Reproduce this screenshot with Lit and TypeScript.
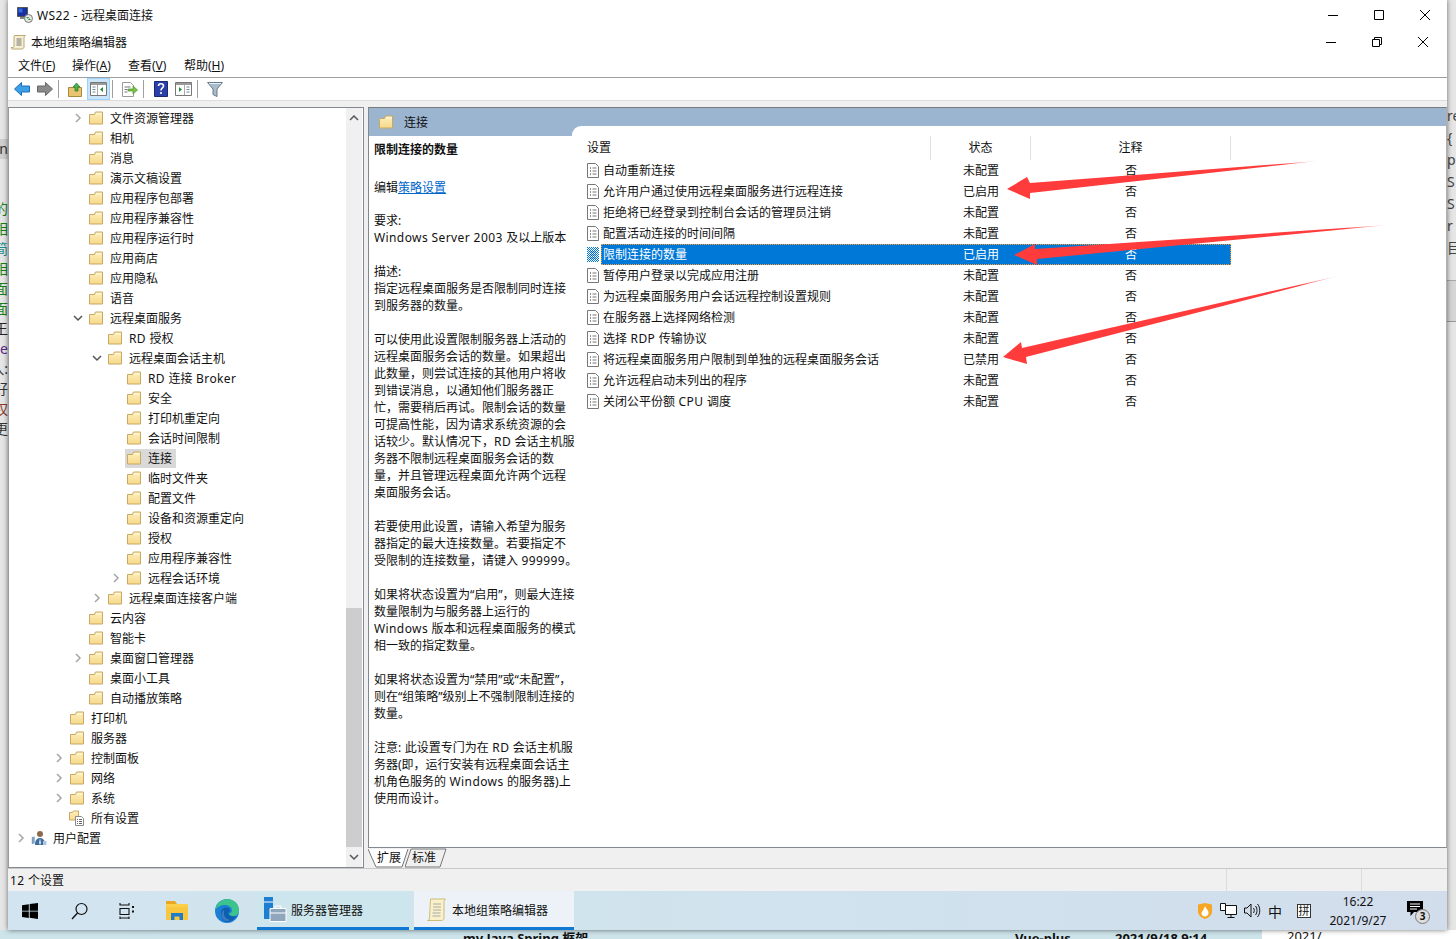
import { LitElement, html, css, svg } from 'lit';
import { customElement } from 'lit/decorators.js';

type TreeItem = { d: number; t: string; c?: 'r' | 'd'; sel?: boolean; icon?: 'all' | 'user' };

const TREE: TreeItem[] = [
  { d: 3, t: '文件资源管理器', c: 'r' },
  { d: 3, t: '相机' },
  { d: 3, t: '消息' },
  { d: 3, t: '演示文稿设置' },
  { d: 3, t: '应用程序包部署' },
  { d: 3, t: '应用程序兼容性' },
  { d: 3, t: '应用程序运行时' },
  { d: 3, t: '应用商店' },
  { d: 3, t: '应用隐私' },
  { d: 3, t: '语音' },
  { d: 3, t: '远程桌面服务', c: 'd' },
  { d: 4, t: 'RD 授权' },
  { d: 4, t: '远程桌面会话主机', c: 'd' },
  { d: 5, t: 'RD 连接 Broker' },
  { d: 5, t: '安全' },
  { d: 5, t: '打印机重定向' },
  { d: 5, t: '会话时间限制' },
  { d: 5, t: '连接', sel: true },
  { d: 5, t: '临时文件夹' },
  { d: 5, t: '配置文件' },
  { d: 5, t: '设备和资源重定向' },
  { d: 5, t: '授权' },
  { d: 5, t: '应用程序兼容性' },
  { d: 5, t: '远程会话环境', c: 'r' },
  { d: 4, t: '远程桌面连接客户端', c: 'r' },
  { d: 3, t: '云内容' },
  { d: 3, t: '智能卡' },
  { d: 3, t: '桌面窗口管理器', c: 'r' },
  { d: 3, t: '桌面小工具' },
  { d: 3, t: '自动播放策略' },
  { d: 2, t: '打印机' },
  { d: 2, t: '服务器' },
  { d: 2, t: '控制面板', c: 'r' },
  { d: 2, t: '网络', c: 'r' },
  { d: 2, t: '系统', c: 'r' },
  { d: 2, t: '所有设置', icon: 'all' },
  { d: 0, t: '用户配置', c: 'r', icon: 'user' },
];

const SETTINGS = [
  ['自动重新连接', '未配置'],
  ['允许用户通过使用远程桌面服务进行远程连接', '已启用'],
  ['拒绝将已经登录到控制台会话的管理员注销', '未配置'],
  ['配置活动连接的时间间隔', '未配置'],
  ['限制连接的数量', '已启用'],
  ['暂停用户登录以完成应用注册', '未配置'],
  ['为远程桌面服务用户会话远程控制设置规则', '未配置'],
  ['在服务器上选择网络检测', '未配置'],
  ['选择 RDP 传输协议', '未配置'],
  ['将远程桌面服务用户限制到单独的远程桌面服务会话', '已禁用'],
  ['允许远程启动未列出的程序', '未配置'],
  ['关闭公平份额 CPU 调度', '未配置'],
];

const DESC = [
  '要求:',
  'Windows Server 2003 及以上版本',
  '',
  '描述:',
  '指定远程桌面服务是否限制同时连接',
  '到服务器的数量。',
  '',
  '可以使用此设置限制服务器上活动的',
  '远程桌面服务会话的数量。如果超出',
  '此数量，则尝试连接的其他用户将收',
  '到错误消息，以通知他们服务器正',
  '忙，需要稍后再试。限制会话的数量',
  '可提高性能，因为请求系统资源的会',
  '话较少。默认情况下，RD 会话主机服',
  '务器不限制远程桌面服务会话的数',
  '量，并且管理远程桌面允许两个远程',
  '桌面服务会话。',
  '',
  '若要使用此设置，请输入希望为服务',
  '器指定的最大连接数量。若要指定不',
  '受限制的连接数量，请键入 999999。',
  '',
  '如果将状态设置为“启用”，则最大连接',
  '数量限制为与服务器上运行的',
  'Windows 版本和远程桌面服务的模式',
  '相一致的指定数量。',
  '',
  '如果将状态设置为“禁用”或“未配置”，',
  '则在“组策略”级别上不强制限制连接的',
  '数量。',
  '',
  '注意: 此设置专门为在 RD 会话主机服',
  '务器(即，运行安装有远程桌面会话主',
  '机角色服务的 Windows 的服务器)上',
  '使用而设计。',
];

const LEFT_BITS: [string, string][] = [
  ['en', '#333'], ['', ''], ['', ''], ['的', '#1a7f1a'], ['相', '#1a7f1a'], ['简', '#1a8f8f'], ['相', '#1a7f1a'],
  ['面', '#1a7f1a'], ['面', '#1a7f1a'], ['王', '#222'], ['le', '#5a2a8a'], ['入:', '#333'], ['好', '#333'],
  ['权', '#8a3a2a'], ['更', '#333'],
];
const RIGHT_BITS = ['re', '{', 'p', 'S', 'S', 'r', '目'];

// the latin runs in the reference are set a little wider than Noto Sans
const lat = (s: string) =>
  s.split(/([A-Za-z0-9 ]+)/).map((part, i) => (i % 2 ? html`<span class="lat">${part}</span>` : part));

const folder = () => html`<svg width="16" height="16" viewBox="0 0 16 16">
  <path d="M1.500 4.500h5l1-2.500h7v12h-13z" fill="url(#folderFill)" stroke="#c9a862"/>
  <path d="M8 3h5.500v1.500h-5.500z" fill="#fff6d6"/>
</svg>`;

const doc = () => html`<svg width="12" height="15" viewBox="0 0 12 15">
  <path d="M.5.5h8l3 3v11h-11z" fill="#fff" stroke="#777"/>
  <path d="M3 5h1M3 8h1M3 11h1" stroke="#222"/>
  <path d="M5.500 5h4M5.500 8h4M5.500 11h4" stroke="#777"/>
</svg>`;

const docSelected = () => html`<svg width="12" height="15" viewBox="0 0 12 15">
  <defs><pattern id="dith" width="2" height="2" patternUnits="userSpaceOnUse">
    <rect width="2" height="2" fill="#fff"/><rect width="1" height="1" fill="#0078d7"/><rect x="1" y="1" width="1" height="1" fill="#0078d7"/>
  </pattern></defs>
  <rect width="12" height="15" fill="url(#dith)"/>
  <path d="M3 5h6M3 8h6M3 11h6" stroke="#0a4a80" opacity=".6"/>
</svg>`;

const allSettings = () => html`<svg width="16" height="16" viewBox="0 0 16 16">
  <path d="M.5 2.500h3l1-1.500h5v9h-9z" fill="url(#folderFill)" stroke="#c9a862"/>
  <path d="M6.500 6.500h6l2 2v7h-8z" fill="#fff" stroke="#8a8a8a"/>
  <path d="M8 9.500h1M8 11.500h1M8 13.500h1M10 9.500h3M10 11.500h3M10 13.500h3" stroke="#666"/>
</svg>`;

const user = () => html`<svg width="16" height="16" viewBox="0 0 16 16">
  <circle cx="9" cy="4" r="3" fill="#8a6a4a"/>
  <path d="M4 15c0-5 2-7 5-7s5 2 5 7z" fill="#3f6d9e"/>
  <path d="M9 8l-1 5 1 2 1-2z" fill="#dfe8f2"/>
  <path d="M1.500 7v7M3 6.500v7" stroke="#7a9cc0" stroke-width="1.400"/>
  <path d="M12 11h3.500v4h-3.500z" fill="#a9c6e2"/>
</svg>`;

const chevron = (c?: 'r' | 'd') => {
  if (c === 'r') return html`<svg width="12" height="12" viewBox="0 0 12 12"><path d="M4 2l4 4-4 4" fill="none" stroke="#a6a6a6" stroke-width="1.500"/></svg>`;
  if (c === 'd') return html`<svg width="12" height="12" viewBox="0 0 12 12"><path d="M2 4l4 4 4-4" fill="none" stroke="#555" stroke-width="1.500"/></svg>`;
  return null;
};

const arrow = (points: string) => svg`<polygon points=${points} fill="url(#arrowFade)"/>`;

@customElement('app-root')
export class AppRoot extends LitElement {
  static styles = css`
    :host {
      display: block;
      position: relative;
      width: 1456px;
      height: 939px;
      overflow: hidden;
      background: #e6e6e6;
      font-family: "Noto Sans", "Noto Sans CJK SC", sans-serif;
      font-size: 12px;
      color: #111;
    }

    .lat { letter-spacing: 0.4px; }

    .left-bits, .right-bits {
      position: absolute;
      overflow: hidden;
      display: flex;
      flex-direction: column;
      font-size: 14px;
      line-height: 20px;
    }
    .left-bits { left: 0; top: 139px; width: 8px; }
    .left-bits div { height: 20px; display: flex; justify-content: flex-end; white-space: nowrap; }
    .left-bits div.en { background: #cfcfcf; }
    .right-bits { left: 1447px; top: 105px; width: 9px; line-height: 22px; color: #444; }
    .right-bits div { height: 22px; white-space: nowrap; }
    .band { position: absolute; left: 1447px; top: 280px; width: 9px; height: 40px; background: #d6d6d6; border-top: 1px solid #aaa; border-bottom: 1px solid #999; }

    .window {
      position: relative;
      margin-left: 8px;
      width: 1439px;
      padding-top: 1px;
      background: #fff;
      box-shadow: 0 0 5px rgba(0, 0, 0, 0.55);
    }

    .title-row { height: 29px; box-sizing: border-box; padding-bottom: 2px; display: flex; align-items: center; }
    .title-row svg.logo { margin: 0 4px 0 9px; }
    .sub-row { height: 24px; display: flex; align-items: center; }
    .sub-row svg.logo { margin: 0 4px 0 3px; }
    .grow { flex: 1; }

    .caps { display: flex; align-items: center; }
    .caps svg { display: block; }
    .caps .cap { width: 46px; display: flex; justify-content: center; }
    .title-row .caps { margin-right: -1px; }
    .sub-row .caps { margin-right: 1px; }

    .menu { height: 23px; box-sizing: content-box; display: flex; align-items: center; padding-left: 10px; border-bottom: 1px solid #a0a0a0; }
    .menu span.m { width: 56px; padding-bottom: 2px; }
    .menu span.m:first-child { width: 54px; }
    .menu u { text-underline-offset: 1px; }

    .toolbar { height: 22px; display: flex; align-items: center; padding-left: 2px; border-bottom: 1px solid #dcdcdc; }
    .tool { width: 23px; height: 22px; display: flex; align-items: center; justify-content: center; box-sizing: border-box; }
    .tool.on { background: #cce4f7; border: 1px solid #99d1ff; }
    .tsep { width: 1px; height: 18px; background: #a0a0a0; margin: 0 5px 0 2px; }

    .gap { height: 6px; background: #f0f0f0; }

    .main { height: 761px; display: flex; background: #f0f0f0; }

    .tree {
      width: 356px;
      box-sizing: border-box;
      height: 761px;
      border: 1px solid #828790;
      border-left-color: #9a9a9a;
      background: #fff;
      display: flex;
      overflow: hidden;
    }
    .tree-list { flex: 1; overflow: hidden; }
    .tree-row { height: 20px; display: flex; align-items: center; white-space: nowrap; }
    .chev { width: 12px; height: 12px; margin-right: 3px; flex: none; }
    .chev svg { display: block; }
    .node { display: flex; align-items: center; gap: 6px; height: 19px; padding: 0 4px 0 1px; }
    .node.sel { background: #d9d9d9; }
    .node svg { display: block; flex: none; }

    .vscroll { width: 16px; margin-right: 1px; background: #f0f0f0; display: flex; flex-direction: column; }
    .vscroll .btn { height: 20px; display: flex; align-items: center; justify-content: center; }
    .vscroll .track { flex: 1; display: flex; flex-direction: column; justify-content: flex-end; }
    .vscroll .thumb { height: 239px; background: #cdcdcd; }

    .pane {
      margin-left: 4px;
      width: 1079px;
      height: 761px;
      display: flex;
      flex-direction: column;
    }
    .pane-inner {
      height: 741px;
      box-sizing: border-box;
      border: 1px solid #828790;
      border-top-color: #7a7a7a;
      border-right-color: #b0b0b0;
      background: #fff;
      display: flex;
      flex-direction: column;
      overflow: hidden;
    }
    .pane-head {
      height: 28px;
      flex: none;
      background: #9bb4d0;
      display: flex;
      align-items: flex-start;
      padding: 6px 0 0 9px;
      box-sizing: border-box;
      gap: 10px;
    }
    .pane-head span { line-height: 17px; }
    .pane-body { flex: 1; display: flex; }

    .desc {
      position: relative;
      z-index: 1;
      width: 203px;
      flex: none;
      box-sizing: border-box;
      padding: 5px 0 0 5px;
      white-space: nowrap;
      line-height: 17px;
    }
    .desc .h { font-weight: 700; margin-bottom: 21px; }
    .desc .edit { margin-bottom: 16px; }
    .desc a { color: #0066cc; text-decoration: underline; }
    .desc .ln { height: 17px; }

    .list {
      flex: 1;
      margin-top: -10px;
      background: #fff;
      border-top-left-radius: 9px;
      padding-top: 10px;
    }
    .list-head { height: 24px; display: flex; align-items: center; }
    .list-head div { height: 24px; line-height: 23px; box-sizing: border-box; }
    .lh-name { width: 358px; padding-left: 15px; }
    .lh-col { border-left: 1px solid #e0e0e0; text-align: center; }
    .lh-status { width: 100px; }
    .lh-note { width: 200px; }
    .lh-end { width: 1px; border-left: 1px solid #e0e0e0; }

    .row { height: 21px; display: flex; align-items: center; }
    .row .ic { width: 29px; padding-left: 15px; box-sizing: border-box; flex: none; }
    .row .ic svg { display: block; }
    .row .body { width: 630px; height: 21px; padding-bottom: 2px; display: flex; align-items: center; box-sizing: border-box; }
    .row .nm { width: 329px; padding-left: 2px; box-sizing: border-box; white-space: nowrap; }
    .row .st { width: 100px; padding-left: 2px; box-sizing: border-box; text-align: center; }
    .row .nt { width: 200px; padding-left: 2px; box-sizing: border-box; text-align: center; }
    .row.sel .body { background: #0078d7; color: #fff; outline: 1px dotted #ff9a2e; outline-offset: -1px; }

    .tabs { height: 20px; display: flex; padding-left: 0; background: #f0f0f0; }
    .tab { position: relative; height: 20px; line-height: 20px; }
    .tab svg { position: absolute; left: 0; top: 0; }
    .tab span { position: relative; }
    .tab.a { width: 37px; padding-left: 9px; box-sizing: border-box; }
    .tab.b { width: 42px; padding-left: 7px; box-sizing: border-box; }

    .status {
      height: 23px;
      box-sizing: border-box;
      background: #f0f0f0;
      border-top: 1px solid #c8c8c8;
      display: flex;
      align-items: center;
      padding-left: 2px;
    }
    .status .s1 { width: 1217px; }
    .status .s2 { width: 134px; height: 22px; border-left: 1px solid #dcdcdc; }
    .status .s3 { width: 85px; height: 22px; border-left: 1px solid #dcdcdc; }

    .taskbar {
      height: 39px;
      display: flex;
      align-items: center;
      background: linear-gradient(90deg, #d2e4f0 0%, #cfe4ec 30%, #d0e2ee 60%, #d2ddec 100%);
    }
    .tb { display: flex; align-items: center; justify-content: center; height: 39px; flex: none; }
    .tb svg { display: block; }
    .tb.w44 { width: 44px; }
    .tb.w56 { width: 56px; }
    .tb.w38 { width: 38px; }
    .tb.w62 { width: 62px; }
    .app {
      height: 39px;
      box-sizing: border-box;
      display: flex;
      align-items: center;
      flex: none;
      border-bottom: 3px solid #0f78d2;
      padding-top: 2px;
    }
    .app.one { margin-left: 11px; width: 152px; padding-left: 7px; gap: 4px; background: #cde5ec; }
    .app.two { margin-left: 5px; width: 160px; padding-left: 13px; gap: 6px; background: #edf2f8; }

    .tray { display: flex; align-items: center; height: 39px; flex: none; padding-right: 10px; }
    .tray svg { display: block; flex: none; }
    .tray .net { margin-left: 8px; }
    .tray .vol { margin-left: 7px; }
    .tray .zh { font-size: 14px; width: 22px; margin-left: 3px; text-align: center; }
    .tray .py { width: 14px; height: 14px; margin-left: 11px; box-sizing: border-box; border: 1px solid #333; background: #fff; font-size: 11px; line-height: 12px; text-align: center; }
    .clock { width: 76px; margin-left: 9px; text-align: center; line-height: 19px; }
    .note { position: relative; width: 30px; height: 20px; margin-left: 11px; }
    .note .count {
      position: absolute;
      left: 8px;
      top: 8px;
      width: 15px;
      height: 15px;
      box-sizing: border-box;
      border: 1px solid #777;
      border-radius: 50%;
      background: #ddd;
      font-size: 10px;
      font-weight: 700;
      line-height: 13px;
      text-align: center;
    }

    .below {
      height: 9px;
      display: flex;
      overflow: hidden;
      font-size: 13px;
      font-weight: 700;
      line-height: 16px;
    }
    .below .teal {
      width: 1262px;
      height: 9px;
      flex: none;
      display: flex;
      background: #cde4ea;
      padding-top: 0;
    }
    .below .rest { flex: 1; background: #fff; font-weight: 400; padding-left: 25px; line-height: 12px; }
    .below .b1 { margin-left: 463px; width: 552px; }
    .below .b2 { width: 100px; }

    .arrows { position: absolute; left: 0; top: 0; pointer-events: none; }
  `;

  render() {
    return html`
      <div class="left-bits">
        ${LEFT_BITS.map(([t, col]) => html`<div class=${t === 'en' ? 'en' : ''} style="color:${col}"><span>${t}</span></div>`)}
      </div>
      <div class="band"></div>
      <div class="right-bits">${RIGHT_BITS.map((t) => html`<div>${t}</div>`)}</div>

      <div class="window">
        ${this.titleRow()}
        ${this.subRow()}
        <div class="menu">
          <span class="m">文件(<u>F</u>)</span>
          <span class="m">操作(<u>A</u>)</span>
          <span class="m">查看(<u>V</u>)</span>
          <span class="m">帮助(<u>H</u>)</span>
        </div>
        ${this.toolbar()}
        <div class="gap"></div>
        <div class="main">
          ${this.tree()}
          <div class="pane">
            <div class="pane-inner">
              <div class="pane-head">${folder()}<span>连接</span></div>
              <div class="pane-body">
                ${this.desc()}
                ${this.list()}
              </div>
            </div>
            <div class="tabs">
              <div class="tab a">
                <svg width="42" height="20"><path d="M0 1l8 18h26l6-18" fill="#fff" stroke="#777"/></svg>
                <span>扩展</span>
              </div>
              <div class="tab b">
                <svg width="42" height="20"><path d="M0 19l6-18h35l-6 18z" fill="#f0f0f0" stroke="#777"/></svg>
                <span>标准</span>
              </div>
            </div>
          </div>
        </div>
        <div class="status">
          <div class="s1">${lat('12 个设置')}</div>
          <div class="s2"></div>
          <div class="s3"></div>
        </div>
        ${this.taskbar()}
      </div>

      <div class="below">
        <div class="teal">
          <span class="b1">my Java Spring 框架</span>
          <span class="b2">Vue-plus</span>
          <span>2021/9/18 9:14</span>
        </div>
        <div class="rest">2021/</div>
      </div>

      <svg class="arrows" width="1456" height="939">
        <defs>
          <linearGradient id="arrowFade" x1="0" x2="1" y1="0" y2="0">
            <stop offset="0" stop-color="#ff3b3b"/>
            <stop offset="0.88" stop-color="#ff3b3b"/>
            <stop offset="1" stop-color="#ff3b3b" stop-opacity="0.15"/>
          </linearGradient>
          <linearGradient id="folderFill" x1="0" x2="0" y1="0" y2="1">
            <stop offset="0" stop-color="#fdefbd"/>
            <stop offset="1" stop-color="#f7d98a"/>
          </linearGradient>
        </defs>
        ${arrow('1007,189 1027,177 1030,183 1318,161 1030,193 1030,199')}
        ${arrow('1014,255 1035,244 1035,249 1388,225 1037,259 1037,265')}
        ${arrow('1003,357 1021,342 1022,348 1338,276 1026,357 1027,364')}
      </svg>
    `;
  }

  titleRow() {
    return html`<div class="title-row">
      <svg class="logo" width="16" height="16" viewBox="0 0 16 16">
        <path d="M.5.5h10v9h-10z" fill="#1a2fa0" stroke="#555"/>
        <path d="M1.500 1.500h4v4h-4z" fill="#2d6fe0"/>
        <path d="M3 10h5v2h-5z" fill="#888"/>
        <circle cx="11.500" cy="11.500" r="4" fill="#e8e8e8" stroke="#777"/>
        <path d="M9.500 10.500h2l-1 1M13.500 12.500h-2l1-1" stroke="#2a9a3a" fill="none"/>
      </svg>
      <span>${lat('WS22 - ')}远程桌面连接</span>
      <div class="grow"></div>
      <div class="caps">
        <div class="cap"><svg width="10" height="10"><path d="M0 5.500h10" stroke="#000"/></svg></div>
        <div class="cap"><svg width="10" height="10"><path d="M.5.5h9v9h-9z" fill="none" stroke="#000"/></svg></div>
        <div class="cap"><svg width="10" height="10"><path d="M0 0l10 10M10 0l-10 10" stroke="#000"/></svg></div>
      </div>
    </div>`;
  }

  subRow() {
    return html`<div class="sub-row">
      <svg class="logo" width="16" height="16" viewBox="0 0 16 16">
        <path d="M3.500 1.500h11c-1 .5-1.500 1.500-1.500 2.500v9c0 1-1 2-2 2h-9.500c-1 0-1.500-.5-1.500-1.500h2c.5 0 1-.5 1-1.500v-9c0-1 .5-1.500 1-1.500z" fill="#f6efd2" stroke="#b9a878"/>
        <path d="M5.500 5h5M5.500 7h5M5.500 9h5M5.500 11h5" stroke="#777"/>
      </svg>
      <span>本地组策略编辑器</span>
      <div class="grow"></div>
      <div class="caps">
        <div class="cap"><svg width="10" height="10"><path d="M0 5.500h10" stroke="#000"/></svg></div>
        <div class="cap"><svg width="10" height="10"><path d="M.5 2.500h7v7h-7zM2.500 2.500v-2h7v7h-2" fill="none" stroke="#000"/></svg></div>
        <div class="cap"><svg width="10" height="10"><path d="M0 0l10 10M10 0l-10 10" stroke="#000"/></svg></div>
      </div>
    </div>`;
  }

  toolbar() {
    return html`<div class="toolbar">
      <div class="tool"><svg width="16" height="14" viewBox="0 0 16 14"><path d="M.5 7l7-6.500v3.500h8v6h-8v3.500z" fill="#3ba0e6" stroke="#1f6fb5"/></svg></div>
      <div class="tool"><svg width="16" height="14" viewBox="0 0 16 14"><path d="M15.500 7l-7-6.500v3.500h-8v6h8v3.500z" fill="#8a8a8a" stroke="#666"/></svg></div>
      <div class="tsep"></div>
      <div class="tool"><svg width="15" height="15" viewBox="0 0 15 15"><path d="M.5 5.500h13v9h-13z" fill="#e9c56f" stroke="#a98a3c"/><path d="M7 9v-4h-2l3.500-4 3.500 4h-2v4z" fill="#4bb34b" stroke="#2a7a2a" stroke-width=".7"/></svg></div>
      <div class="tool on"><svg width="17" height="14" viewBox="0 0 17 14"><path d="M.5.5h16v13h-16z" fill="#fff" stroke="#777"/><path d="M1 1h15v2h-15z" fill="#9a9a9a"/><path d="M2.500 5h3M2.500 7.500h3M2.500 10h3" stroke="#6a8aa0"/><path d="M7.500 3v10" stroke="#aaa"/><path d="M13 5v5l-3-2.500z" fill="#2a8a3a"/></svg></div>
      <div class="tsep"></div>
      <div class="tool"><svg width="17" height="15" viewBox="0 0 17 15"><path d="M1.500.5h8l3 3v11h-11z" fill="#fff" stroke="#999"/><path d="M3.500 5h6M3.500 7.500h3M3.500 10h3" stroke="#777"/><path d="M7 7h5v-3l4.500 4-4.500 4v-3h-5z" fill="#7cc24a" stroke="#4a8f2a" stroke-width=".7"/></svg></div>
      <div class="tsep"></div>
      <div class="tool"><svg width="14" height="16" viewBox="0 0 14 16"><path d="M.5.5h13v15h-13z" fill="#2a3fa8" stroke="#1a2a70"/><path d="M4.500 5c0-3 5-3 5 0 0 2-2.500 2-2.500 4.500M7 11v2" fill="none" stroke="#fff" stroke-width="1.600"/></svg></div>
      <div class="tool"><svg width="17" height="14" viewBox="0 0 17 14"><path d="M.5.5h16v13h-16z" fill="#fff" stroke="#777"/><path d="M1 1h15v2h-15z" fill="#9a9a9a"/><path d="M11.500 5h3M11.500 7.500h3M11.500 10h3" stroke="#6a8aa0"/><path d="M9.500 3v10" stroke="#aaa"/><path d="M4 5v5l3-2.500z" fill="#2a8a3a"/></svg></div>
      <div class="tsep"></div>
      <div class="tool"><svg width="16" height="15" viewBox="0 0 16 15"><path d="M.5.5h15l-5.500 6.500v7.500l-4-2v-5.500z" fill="#a9bccb" stroke="#6a7a88"/><path d="M2 1.500h12" stroke="#e6eef4"/></svg></div>
    </div>`;
  }

  tree() {
    return html`<div class="tree">
      <div class="tree-list">
        ${TREE.map((n) => html`<div class="tree-row" style="padding-left:${6 + n.d * 19}px">
          <div class="chev">${chevron(n.c)}</div>
          <div class="node ${n.sel ? 'sel' : ''}">
            ${n.icon === 'all' ? allSettings() : n.icon === 'user' ? user() : folder()}
            <span>${lat(n.t)}</span>
          </div>
        </div>`)}
      </div>
      <div class="vscroll">
        <div class="btn"><svg width="10" height="8"><path d="M1 6l4-4 4 4" fill="none" stroke="#555" stroke-width="1.500"/></svg></div>
        <div class="track"><div class="thumb"></div></div>
        <div class="btn"><svg width="10" height="8"><path d="M1 2l4 4 4-4" fill="none" stroke="#555" stroke-width="1.500"/></svg></div>
      </div>
    </div>`;
  }

  desc() {
    return html`<div class="desc">
      <div class="h">限制连接的数量</div>
      <div class="edit">编辑<a>策略设置</a></div>
      ${DESC.map((l) => html`<div class="ln">${lat(l)}</div>`)}
    </div>`;
  }

  list() {
    return html`<div class="list">
      <div class="list-head">
        <div class="lh-name">设置</div>
        <div class="lh-col lh-status">状态</div>
        <div class="lh-col lh-note">注释</div>
        <div class="lh-end"></div>
      </div>
      ${SETTINGS.map(([name, state], i) => html`<div class="row ${i === 4 ? 'sel' : ''}">
        <div class="ic">${i === 4 ? docSelected() : doc()}</div>
        <div class="body">
          <div class="nm">${lat(name)}</div>
          <div class="st">${state}</div>
          <div class="nt">否</div>
        </div>
      </div>`)}
    </div>`;
  }

  taskbar() {
    return html`<div class="taskbar">
      <div class="tb w44"><svg width="16" height="16" viewBox="0 0 16 16"><path d="M0 2.200l6.800-1v6.500h-6.800zM7.700 1l8.300-1v7.700h-8.300zM0 8.500h6.800v6.400l-6.800-1zM7.700 8.500h8.300v7.500l-8.300-1.200z" fill="#000"/></svg></div>
      <div class="tb w56"><svg width="18" height="18" viewBox="0 0 18 18"><circle cx="10.500" cy="7" r="5.500" fill="none" stroke="#111" stroke-width="1.200"/><path d="M6.500 11l-5.500 6" stroke="#111" stroke-width="1.400"/></svg></div>
      <div class="tb w38"><svg width="16" height="16" viewBox="0 0 16 16"><path d="M1 0v2.500M10 0v2.500M1 2h9M1 5.500h9v6h-9zM1 15h9M1 13.500v2.500M10 13.500v2.500" fill="none" stroke="#111" stroke-width="1.100"/><path d="M14 3v2M14 7.500v2" stroke="#111" stroke-width="2"/></svg></div>
      <div class="tb w62"><svg width="22" height="19" viewBox="0 0 22 19"><path d="M0 0h9l2 3h-11z" fill="#e8a820"/><path d="M0 3h22v16h-22z" fill="#fbcf4a"/><path d="M0 6h22v13h-22z" fill="#f6c136" opacity=".6"/><path d="M5 19v-7h12v7h-3.500v-3.500h-5v3.500z" fill="#1f7ccb"/></svg></div>
      <div class="tb w38"><svg width="24" height="24" viewBox="0 0 24 24">
        <circle cx="12" cy="12" r="12" fill="#1b7fd6"/>
        <path d="M12 0c7 0 12 5 12 11.500 0 3.500-2.500 5.500-5.500 5.500-3 0-4.500-1-4.500-2.500 2 0 3-1.500 3-3 0-3-3-5.500-7-5.500-4 0-8.500 2-10 5.500 1-6.500 6-11.500 12-11.500z" fill="#3cc48c"/>
        <path d="M6 14c0-3.500 2.500-5.500 5.500-5.500 2.500 0 3.500 1.500 3.500 3 0 1-1 1.500-1.500 2-.5 2.500 2 4 5 4 1 0 2-.3 3-.8-2 3.800-6 6.300-10 6.300-3 0-5.500-3.500-5.500-9z" fill="#0f5fb0"/>
        <path d="M9 13.500c-.5 3.500 2 6.500 6 7.500-1 .6-2.200 1-3.500 1-3 0-5-3-5-6.500 0-2 1-3.500 2.500-4.500z" fill="#fff" opacity=".18"/>
      </svg></div>
      <div class="app one">
        <svg width="23" height="26" viewBox="0 0 23 26"><path d="M0 0h9v22h-9z" fill="#1e7fd0"/><path d="M0 5h9" stroke="#fff"/><path d="M6 11.500h16v13h-16z" fill="#8fa6bc" stroke="#fff"/><path d="M11 11v-2h6v2" fill="none" stroke="#fff"/><path d="M6 16h16" stroke="#fff"/></svg>
        <span>服务器管理器</span>
      </div>
      <div class="app two">
        <svg width="19" height="24" viewBox="0 0 19 24"><path d="M3.500 1h15c-1 1-1.500 2-1.500 3v16c0 1-1 2.500-2.500 2.500h-14c1 0 2-1 2-2.500z" fill="#f8f1c9" stroke="#cdbb7a"/><path d="M6 6h8M6 9h8M6 12h8M5.500 15h8M5.500 18h8" stroke="#aaa"/></svg>
        <span>本地组策略编辑器</span>
      </div>
      <div class="grow"></div>
      <div class="tray">
        <svg width="14" height="16" viewBox="0 0 14 16"><path d="M0 1.500l7-1.500 7 1.500v7c0 3.500-3 6-7 7.500-4-1.500-7-4-7-7.500z" fill="#f6a623"/><path d="M7 3c1 3 3.500 4 3.500 7 0 2.500-2 3.500-3.500 3.500s-3.500-1-3.500-3c0-2 2-2.500 3.500-7.500z" fill="#fff"/></svg>
        <svg class="net" width="17" height="16" viewBox="0 0 17 16"><path d="M5.500 2.500h11v9h-11zM.5.500h5v7h-5zM11 11.500v3M7.500 14.500h7" fill="#fff" stroke="#111"/></svg>
        <svg class="vol" width="17" height="15" viewBox="0 0 17 15"><path d="M.5 5h2.500l4-4v13l-4-4h-2.500z" fill="none" stroke="#111"/><path d="M9.500 5c1 1.500 1 3.500 0 5M11.500 3c2 2.500 2 6.500 0 9M13.500 1c3 3.500 3 9.500 0 13" fill="none" stroke="#111"/></svg>
        <span class="zh">中</span>
        <div class="py">拼</div>
        <div class="clock"><div>16:22</div><div>2021/9/27</div></div>
        <div class="note">
          <svg width="16" height="16" viewBox="0 0 16 16"><path d="M0 0h16v11h-9l-3.500 4v-4h-3.500z" fill="#000"/><path d="M3 3h10M3 5.500h10M3 8h7" stroke="#fff"/></svg>
          <div class="count">3</div>
        </div>
      </div>
    </div>`;
  }
}
